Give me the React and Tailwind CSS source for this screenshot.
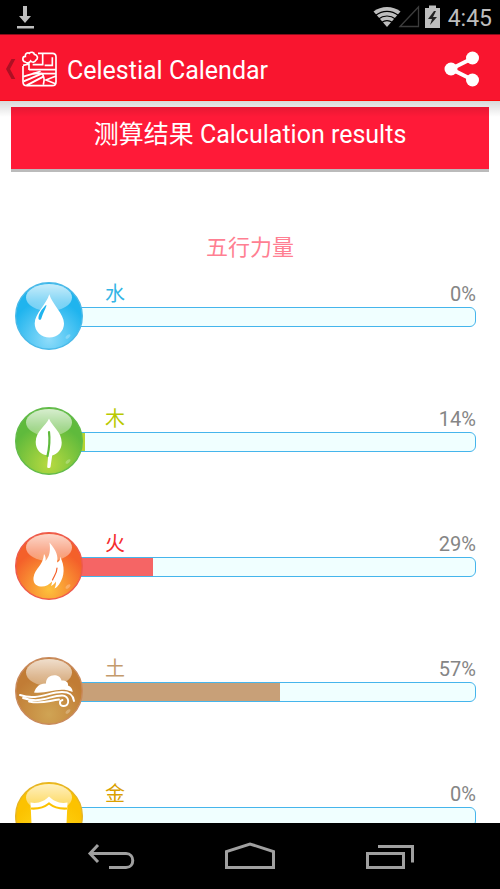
import React from 'react';

const elements = [
  { id: 'water', name: '水', percent: 0, text: 'text-[#33b5e5]', bar: 'bg-[#33b5e5]', rim: '#4ab9e8', edge: '#1fb4ee', core: '#8fdcfa' },
  { id: 'wood', name: '木', percent: 14, text: 'text-[#b9c900]', bar: 'bg-[#b4d433]', rim: '#62bb4a', edge: '#5fba3c', core: '#b8da40' },
  { id: 'fire', name: '火', percent: 29, text: 'text-[#f52c2c]', bar: 'bg-[#f56565]', rim: '#ee5a4c', edge: '#f4602a', core: '#fdc23c' },
  { id: 'earth', name: '土', percent: 57, text: 'text-[#c49a6c]', bar: 'bg-[#c8a078]', rim: '#c98a5c', edge: '#c17c35', core: '#d0a454' },
  { id: 'metal', name: '金', percent: 0, text: 'text-[#daa000]', bar: 'bg-[#ffd000]', rim: '#e6b422', edge: '#fcc200', core: '#ffdc1e' },
];

function Glyph({ id, color }) {
  switch (id) {
    case 'water':
      return (
        <>
          <path d="M34.300 12.300C37 22 49 32 49 41.500a14.600 14 0 0 1-29.300 0C19.700 32 31.600 22 34.300 12.300Z" fill="#fff" />
          <path d="M31 23c-4 4-8 9-7.500 14 1 1.500 2.500 1 3-1C28 31 30 28 31.500 23.500Z" fill={color} />
        </>
      );
    case 'wood':
      return (
        <>
          <path d="M34 11.500c3 8 12.700 13 12.700 24 0 7-4 11.500-9.500 13L35.500 60c-.5 1.500-3.500 1.500-3.300-.3l1-11.400C26 48.500 20.700 42.500 20.700 35 20.700 24 31 19 34 11.500Z" fill="#fff" />
          <path d="M34 25c1 8 .5 15-1.500 24" stroke={color} strokeWidth="2.200" strokeLinecap="round" fill="none" />
        </>
      );
    case 'fire':
      return (
        <>
          <path d="M34.500 10.500c7 8 9 14 7.500 20 2.500-1 3.500-3 3-6 5 9 5 20-1 28-1.500 2-2.500 3-4.500 4 1-2.500 1.500-4 1.500-7-1.500 2-3 3.500-5 4.500.5-1.500 1-2.500 1-4.500-3 3.500-7 5.500-11.500 5-5-.5-7.500-4-7-9C20 36 28 34 29 22c1.500 2 2 4 1.500 7C35 24 35.500 18 34.500 10.500Z" fill="#fff" />
          <path d="M42 36c0 5-3 8-4.500 12" stroke={color} strokeWidth="1.200" strokeLinecap="round" fill="none" />
        </>
      );
    case 'earth':
      return (
        <>
          <path d="M19 35.500c1.500-3 3-9 12-9-.5-10 14-11 15.500-3 5 0 7 2 6.500 5 3 1 4.500 3.500 4.700 6.500C44 29 34 37 19 35.500Z" fill="#fff" />
          <path d="M5 38c17 6 29-3 42-3 8 0 11 3 12 9M8 41c18 6 27-2.500 39-2.500 8 0 8 11 1.500 10.500-4 0-5-5-1-6M14 44.500c13 3 20-1 30-2" stroke="#fff" strokeWidth="1.900" strokeLinecap="round" fill="none" />
        </>
      );
    default:
      return (
        <>
          <path d="M15.500 20.500c8 1.500 14-1.500 18.500-6 4.500 4.500 10.500 7.500 18.500 6l-1 21.500c-2 9-10 15-17.500 18-7.500-3-15.500-9-17.500-18Z" fill="#fff" />
          <path d="M16 26.500c7 .5 13-1 18-5 5 4 11 5.500 18 5" stroke={color} strokeWidth="2.200" fill="none" />
        </>
      );
  }
}

function ElementOrb({ id, rim, edge, core }) {
  return (
    <svg viewBox="0 0 68 68" className="relative z-10 h-[68px] w-[68px] shrink-0" aria-hidden="true">
      <defs>
        <radialGradient id={`${id}-body`} cx="0.5" cy="0.85" r="0.6">
          <stop offset="0" stopColor={core} />
          <stop offset="1" stopColor={edge} />
        </radialGradient>
        <linearGradient id={`${id}-gloss`} x1="0" y1="0" x2="0" y2="1">
          <stop offset="0" stopColor="#fff" stopOpacity="0.75" />
          <stop offset="1" stopColor="#fff" stopOpacity="0.3" />
        </linearGradient>
      </defs>
      <circle cx="34" cy="34" r="33.300" fill={`url(#${id}-body)`} stroke={rim} strokeWidth="1.400" />
      <ellipse cx="34" cy="15.500" rx="23" ry="13.500" fill={`url(#${id}-gloss)`} />
      <Glyph id={id} color={edge} />
      <ellipse cx="53" cy="54.500" rx="3" ry="1.500" transform="rotate(-40 53 54.500)" fill="#fff" opacity="0.250" />
    </svg>
  );
}

function ElementRow({ item }) {
  return (
    <li className="flex h-[68px]">
      <ElementOrb {...item} />
      <div className="-ml-[62px] min-w-0 flex-1">
        <div className="flex h-[25px] justify-between pl-[84px] text-xl leading-6">
          <span id={`${item.id}-label`} className={item.text}>{item.name}</span>
          <span className="text-[#858585]">{item.percent}%</span>
        </div>
        <div
          role="progressbar"
          aria-labelledby={`${item.id}-label`}
          aria-valuenow={item.percent}
          className="h-5 overflow-hidden rounded-md border border-[#45b5ec] bg-[#f0ffff]"
        >
          <div className={`h-full ${item.bar}`} style={{ width: `${item.percent}%` }} />
        </div>
      </div>
    </li>
  );
}

function StatusBar() {
  return (
    <div className="flex h-[34px] shrink-0 items-center justify-between bg-black pr-2 pl-4 text-[#bebebe]">
      <svg viewBox="0 0 18 24" className="h-6 w-[18px]" fill="currentColor" aria-label="Download">
        <path d="M7 1h4v10h4l-6 7-6-7h4zM1 21h17v2.500H1z" />
      </svg>
      <div className="flex items-center">
        <svg viewBox="0 0 74 30" className="h-[30px] w-[74px]" aria-hidden="true">
          <path d="M17 25 3.500 9.500C11 3.500 23 3.500 30.500 9.500Z" fill="#bebebe" />
          <path d="M5.500 13.500c7-5.500 16-5.500 23 0M8.500 17c5-4 12-4 17 0M11.500 20.500c3.500-2.500 7.500-2.500 11 0" stroke="#000" strokeWidth="1.200" fill="none" />
          <path d="M30 24.500 48.500 5v19.500Z" stroke="#3c3c3c" strokeWidth="1.300" fill="none" />
          <path d="M55 6h4V3.500h7V6h4v20H55z" fill="#bebebe" />
          <path d="m64 9-6 8h4l-2 6 7-8h-4l3-6z" fill="#222" />
        </svg>
        <span className="ml-1 pt-1 text-[23px] leading-[30px]">4:45</span>
      </div>
    </div>
  );
}

function AppBar() {
  return (
    <header className="flex h-[67px] shrink-0 items-center justify-between border-t border-b border-t-[#8c0c1b] border-b-[#ff0808] bg-[#f9152f] pt-0.5 pr-5 pl-1.5">
      <button type="button" className="flex items-center" aria-label="Back">
        <svg viewBox="0 0 10 20" className="h-5 w-2.5" fill="#ad1023" aria-hidden="true">
          <path d="M5.500 0h3.800L4 10l5.300 10H5.500L0 10z" />
        </svg>
        <svg viewBox="0 0 105 106" className="ml-1.5 h-9 w-[35px]" fill="none" stroke="#fff" strokeWidth="5" aria-hidden="true">
          <path d="M48 6h43q11 0 11 11v74q0 12-12 12H15Q3 103 3 91V44" />
          <path d="M10 32C0 30 0 15 10 15 9 6 17 3 22 6 27 0 37 3 37 9c10 1 12 13 5 17-3 8-12 8-16 3-4 6-12 7-16 3ZM21 32v24M3 42l18-4M62 8v32H32M91 18v24H68M21 55h81M32 67h70" />
          <path d="M4 76l52-16M5 90l56-24M14 102l50-26" strokeWidth="6" />
          <path d="M60 66q10 14 4 34M102 74 72 86l30 12" />
        </svg>
      </button>
      <h1 className="ml-2.5 flex-1 pt-1 text-[25px] leading-8 text-white">Celestial Calendar</h1>
      <button type="button" aria-label="Share">
        <svg viewBox="0 0 36 36" className="h-9 w-9" fill="#fff" aria-hidden="true">
          <path d="M29 7 7 18l22 11" fill="none" stroke="#fff" strokeWidth="4" />
          <circle cx="7" cy="18" r="6.500" />
          <circle cx="28.500" cy="7" r="6.500" />
          <circle cx="28.500" cy="29" r="6.500" />
        </svg>
      </button>
    </header>
  );
}

function NavBar() {
  return (
    <nav className="flex h-[66px] shrink-0 items-center justify-center gap-[89px] bg-black text-[#a0a0a0]">
      <button type="button" aria-label="Back">
        <svg viewBox="0 0 50 30" className="h-[30px] w-[50px]" fill="none" stroke="currentColor" strokeWidth="3" aria-hidden="true">
          <path d="M12 4 4 12.500 12 21M4 12.500h36c9 0 9 14 0 14H23" />
        </svg>
      </button>
      <button type="button" aria-label="Home">
        <svg viewBox="0 0 50 30" className="h-[30px] w-[50px]" fill="none" stroke="currentColor" strokeWidth="3" aria-hidden="true">
          <path d="M1.500 26.500v-16L25 3l23.500 7.500v16z" />
        </svg>
      </button>
      <button type="button" aria-label="Recent apps">
        <svg viewBox="0 0 50 30" className="h-[30px] w-[50px]" fill="none" stroke="currentColor" strokeWidth="3" aria-hidden="true">
          <path d="M3.500 12.500h36v14h-36zM14 5.500h34.500v16" />
        </svg>
      </button>
    </nav>
  );
}

export default function App() {
  return (
    <div className="flex h-screen flex-col overflow-hidden bg-white font-['Roboto','Noto_Sans_CJK_SC',sans-serif]">
      <StatusBar />
      <AppBar />
      <main className="relative min-h-0 flex-1 overflow-hidden pt-1.5">
        <div className="absolute inset-x-0 top-0 h-4 bg-linear-to-b from-black/15 to-transparent" />
        <h2 className="mx-[11px] h-[65px] border-b-3 border-[#bbbbbb] bg-[#ff1a38] pt-3 text-center text-[25px] leading-8 text-white">
          测算结果 Calculation results
        </h2>
        <h3 className="mt-[60px] text-center text-[22px] leading-8 text-[#ff7f92]">五行力量</h3>
        <ul className="mt-[18px] flex flex-col gap-[57px] pr-6 pl-[15px]">
          {elements.map((item) => (
            <ElementRow key={item.id} item={item} />
          ))}
        </ul>
      </main>
      <NavBar />
    </div>
  );
}
